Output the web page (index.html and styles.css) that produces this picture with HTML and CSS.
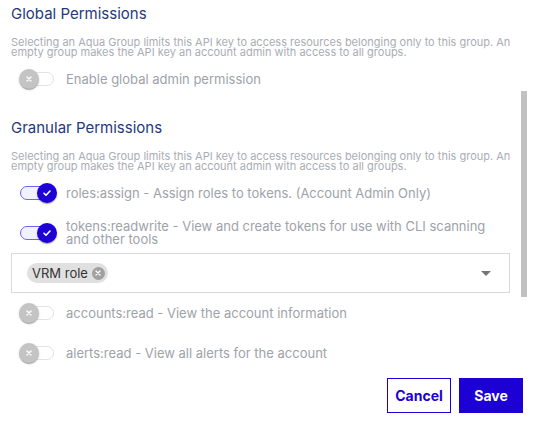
FILE: index.html
```html
<!DOCTYPE html>
<html lang="en">
<head>
    <meta charset="UTF-8">
    <meta name="viewport" content="width=device-width, initial-scale=1.0">
    <title>API Key Permissions</title>
    <link rel="stylesheet" href="styles.css">
</head>
<body>
    <div class="dialog">
        <!-- Scrollable permissions list -->
        <div class="scroll-area">
            <section class="perm-section">
                <h2 class="section-title">Global Permissions</h2>
                <p class="section-desc">Selecting an Aqua Group limits this API key to access resources belonging only to this group. An<br>empty group makes the API key an account admin with access to all groups.</p>
                <label class="toggle-row">
                    <span class="switch">
                        <span class="track"></span>
                        <span class="thumb">
                            <svg width="10" height="10" viewBox="0 0 10 10"><path d="M3 3l4 4M7 3l-4 4" stroke="#fff" stroke-width="1.4" stroke-linecap="round" fill="none"/></svg>
                        </span>
                    </span>
                    <span class="toggle-label">Enable global admin permission</span>
                </label>
            </section>

            <section class="perm-section granular">
                <h2 class="section-title">Granular Permissions</h2>
                <p class="section-desc">Selecting an Aqua Group limits this API key to access resources belonging only to this group. An<br>empty group makes the API key an account admin with access to all groups.</p>

                <label class="toggle-row">
                    <span class="switch on">
                        <span class="track"></span>
                        <span class="thumb">
                            <svg width="12" height="12" viewBox="0 0 12 12"><path d="M3 6.3l2 2 4-4.3" stroke="#fff" stroke-width="1.6" stroke-linecap="round" stroke-linejoin="round" fill="none"/></svg>
                        </span>
                    </span>
                    <span class="toggle-label">roles:assign - Assign roles to tokens. (Account Admin Only)</span>
                </label>

                <label class="toggle-row">
                    <span class="switch on">
                        <span class="track"></span>
                        <span class="thumb">
                            <svg width="12" height="12" viewBox="0 0 12 12"><path d="M3 6.3l2 2 4-4.3" stroke="#fff" stroke-width="1.6" stroke-linecap="round" stroke-linejoin="round" fill="none"/></svg>
                        </span>
                    </span>
                    <span class="toggle-label">tokens:readwrite - View and create tokens for use with CLI scanning<br>and other tools</span>
                </label>

                <div class="select">
                    <span class="chip">
                        <span class="chip-text">VRM role</span>
                        <span class="chip-delete">
                            <svg width="6" height="6" viewBox="0 0 6 6"><path d="M1 1l4 4M5 1l-4 4" stroke="#fff" stroke-width="1.3" stroke-linecap="round"/></svg>
                        </span>
                    </span>
                    <svg class="select-arrow" width="10" height="5" viewBox="0 0 10 5"><path d="M0 0h10L5 5z" fill="#757575"/></svg>
                </div>

                <label class="toggle-row">
                    <span class="switch">
                        <span class="track"></span>
                        <span class="thumb">
                            <svg width="10" height="10" viewBox="0 0 10 10"><path d="M3 3l4 4M7 3l-4 4" stroke="#fff" stroke-width="1.4" stroke-linecap="round" fill="none"/></svg>
                        </span>
                    </span>
                    <span class="toggle-label">accounts:read - View the account information</span>
                </label>

                <label class="toggle-row">
                    <span class="switch">
                        <span class="track"></span>
                        <span class="thumb">
                            <svg width="10" height="10" viewBox="0 0 10 10"><path d="M3 3l4 4M7 3l-4 4" stroke="#fff" stroke-width="1.4" stroke-linecap="round" fill="none"/></svg>
                        </span>
                    </span>
                    <span class="toggle-label">alerts:read - View all alerts for the account</span>
                </label>
            </section>

            <div class="scroll-thumb"></div>
        </div>

        <!-- Footer buttons -->
        <div class="actions">
            <button class="btn btn-outline">Cancel</button>
            <button class="btn btn-primary">Save</button>
        </div>
    </div>
</body>
</html>
```

FILE: styles.css
```css
/* General */
body {
    margin: 0;
    padding: 0;
    background-color: #fff;
    font-family: 'Inter', 'Liberation Sans', sans-serif;
    color: #333;
}

.dialog {
    position: relative;
    width: 534px;
    padding-top: 5px;
}

.scroll-area {
    padding-left: 11px;
    width: 499px;
}

/* Section headers */
.section-title {
    margin: 0;
    font-size: 15px;
    line-height: 18px;
    font-weight: 400;
    color: #25397a;
}

.granular .section-title {
    margin-top: 20px;
}

.section-desc {
    margin: 14px 0 2px 0;
    font-size: 11px;
    line-height: 10px;
    color: #a9adb4;
    white-space: nowrap;
}

/* Toggle rows */
.toggle-row {
    display: flex;
    align-items: center;
    min-height: 40px;
    margin-left: -3px;
    cursor: pointer;
}

.toggle-label {
    font-size: 13px;
    line-height: 13px;
    color: #9ea2a9;
}

.switch {
    position: relative;
    flex: none;
    width: 58px;
    height: 38px;
}

.track {
    position: absolute;
    left: 12px;
    top: 12px;
    width: 34px;
    height: 14px;
    box-sizing: border-box;
    border-radius: 7px;
    border: 1px solid #e3e3e3;
    background-color: #fff;
}

.thumb {
    position: absolute;
    left: 11px;
    top: 9px;
    width: 20px;
    height: 20px;
    border-radius: 50%;
    background-color: #c4c4c4;
    box-shadow: 0 2px 1px -1px rgba(0, 0, 0, 0.2), 0 1px 1px 0 rgba(0, 0, 0, 0.14), 0 1px 3px 0 rgba(0, 0, 0, 0.12);
    display: flex;
    align-items: center;
    justify-content: center;
}

.switch.on .thumb {
    left: 29px;
    background-color: #1c00d4;
}

.switch.on .track {
    border-color: #6b66f2;
    background-color: #f2f2ff;
}

/* Select with chips */
.select {
    display: flex;
    align-items: center;
    height: 40px;
    box-sizing: border-box;
    border: 1px solid #dadada;
    padding: 0 18px 0 15px;
}

.chip {
    display: flex;
    align-items: center;
    height: 20px;
    padding: 0 3px 0 5px;
    border-radius: 10px;
    background-color: #e0e0e0;
}

.chip-text {
    font-size: 13px;
    color: #333;
}

.chip-delete {
    display: flex;
    align-items: center;
    justify-content: center;
    width: 13px;
    height: 13px;
    margin-left: 4px;
    border-radius: 50%;
    background-color: #a0a0a0;
}

.select-arrow {
    margin-left: auto;
}

/* Fake scrollbar */
.scroll-thumb {
    position: absolute;
    left: 521px;
    top: 91px;
    width: 6px;
    height: 206px;
    background-color: #c1c1c1;
}

/* Buttons */
.actions {
    display: flex;
    justify-content: flex-end;
    gap: 8px;
    margin-top: 5px;
    padding-right: 11px;
}

.btn {
    width: 64px;
    height: 35px;
    box-sizing: border-box;
    font-family: 'Inter', 'Liberation Sans', sans-serif;
    font-size: 14px;
    font-weight: 700;
    border: 1px solid #1c00d4;
    cursor: pointer;
}

.btn-outline {
    background-color: #fff;
    color: #1c00d4;
}

.btn-primary {
    background-color: #1c00d4;
    color: #fff;
}
```
